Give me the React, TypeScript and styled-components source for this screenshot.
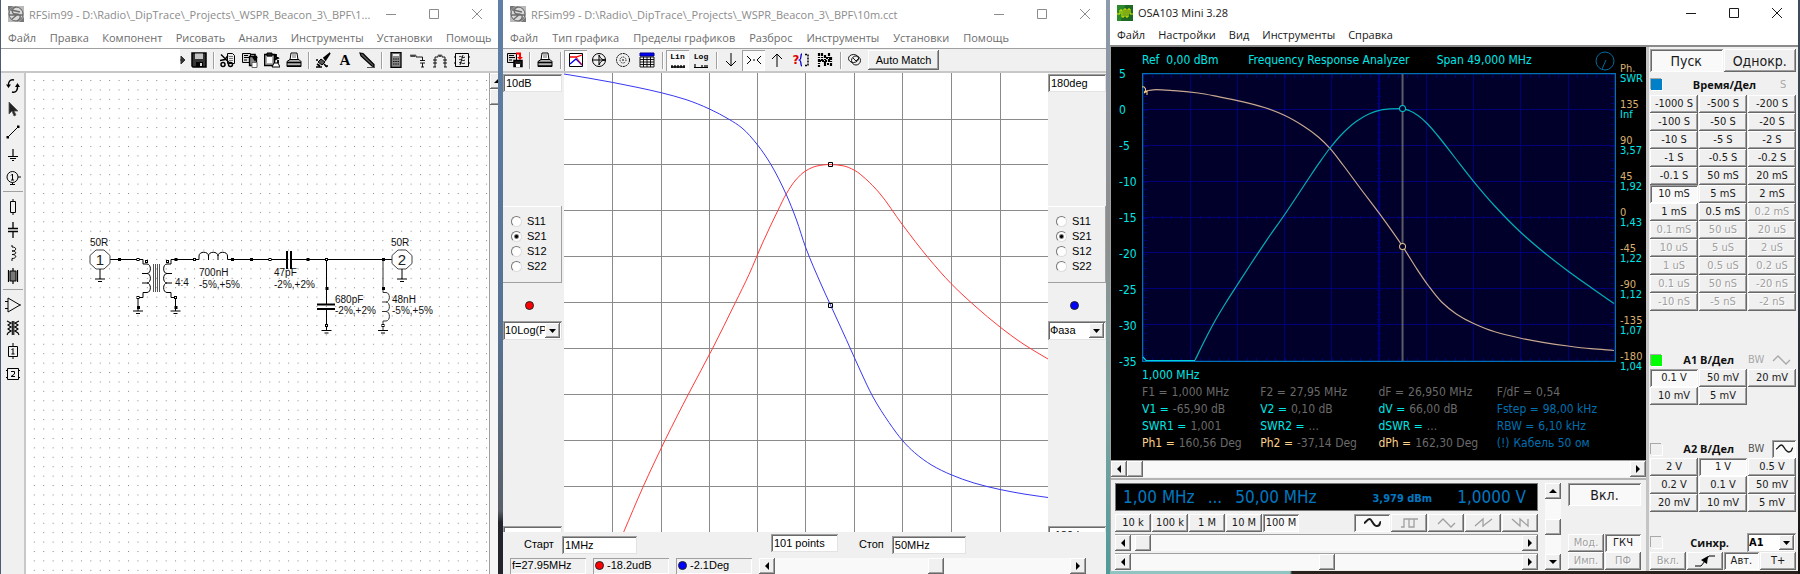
import React from "react";
import styled, { createGlobalStyle, css } from "styled-components";

const UI = `"Open Sans", "Noto Sans", sans-serif`;
const BITMAP = `"Liberation Sans", Arial, sans-serif`;
const TAHOMA = `"DejaVu Sans Condensed", "DejaVu Sans", Tahoma, sans-serif`;

const Global = createGlobalStyle`
  * { box-sizing: border-box; }
  body { margin: 0; background: #1c1c1c; font-family: ${UI}; }
  button, input, select { font: inherit; color: inherit; margin: 0; padding: 0; border: 0; border-radius: 0; min-width: 0; }
  svg { display: block; flex: none; }
`;

/* ---------- shared bevels ---------- */

const raised = css`
  background: #f0f0f0;
  box-shadow: inset -1px -1px #696969, inset 1px 1px #fff, inset -2px -2px #a0a0a0;
`;
const pressed = css`
  background: #f9f9f9;
  box-shadow: inset 1px 1px #a0a0a0, inset -1px -1px #fff, inset 2px 2px #696969;
`;
const sunken = css`
  background: #fff;
  box-shadow: inset 1px 1px #a0a0a0, inset -1px -1px #e3e3e3, inset 2px 2px #696969;
`;

/* ---------- desktop and windows ---------- */

const Desktop = styled.main`
  display: grid;
  grid-template-columns: 1px minmax(0, 497fr) 5px minmax(0, 603fr) 4px minmax(0, 688fr) 2px;
  min-height: 100vh;
  background: #1c1c1c;
`;

const Wallpaper = styled.div<{ $paint: string }>`
  background: ${(p) => p.$paint};
`;

const Win = styled.section`
  display: flex;
  flex-direction: column;
  min-width: 0;
  background: #f0f0f0;
`;

const TitleBar = styled.header<{ $compact?: boolean; $active?: boolean }>`
  display: flex;
  align-items: center;
  gap: 5px;
  height: ${(p) => (p.$compact ? 25 : 28)}px;
  padding-left: 7px;
  background: #fff;
  color: ${(p) => (p.$active ? "#1a1a1a" : "#8c8c8c")};
`;

const Title = styled.h1`
  flex: 1;
  min-width: 0;
  margin: 0;
  font-size: 11px;
  font-weight: 400;
  white-space: nowrap;
`;

const Caption = styled.div`
  display: flex;
`;

const CaptionButton = styled.button`
  display: grid;
  place-items: center;
  width: 43px;
  height: 24px;
  background: none;
`;

const MenuBar = styled.nav<{ $active?: boolean; $gap: number }>`
  display: flex;
  gap: ${(p) => p.$gap}px;
  height: 20px;
  padding: 0 7px;
  align-items: center;
  background: #fff;
  color: ${(p) => (p.$active ? "#1a1a1a" : "#6d6d6d")};
  font-size: 11px;
  line-height: 20px;
`;

const MenuItem = styled.button`
  background: none;
  white-space: nowrap;
`;

const Rule = styled.span`
  flex: none;
  width: 2px;
  height: 17px;
  margin: 0 2px 0 3px;
  background: linear-gradient(90deg, #a0a0a0 50%, #fff 50%);
`;

function CaptionButtons() {
  return (
    <Caption>
      <CaptionButton aria-label="Minimize">
        <svg width="12" height="12" stroke="currentColor" fill="none"><path d="M1 6.5h10" /></svg>
      </CaptionButton>
      <CaptionButton aria-label="Maximize">
        <svg width="12" height="12" stroke="currentColor" fill="none"><path d="M1.500 1.500h9v9h-9z" /></svg>
      </CaptionButton>
      <CaptionButton aria-label="Close">
        <svg width="12" height="12" stroke="currentColor" fill="none"><path d="M1 1l10 10M11 1L1 11" /></svg>
      </CaptionButton>
    </Caption>
  );
}

function Menu({ items, active, gap }: { items: string[]; active?: boolean; gap: number }) {
  return (
    <MenuBar $active={active} $gap={gap}>
      {items.map((t) => <MenuItem key={t}>{t}</MenuItem>)}
    </MenuBar>
  );
}

const SimIcon = () => (
  <svg width="16" height="16" viewBox="0 0 16 16">
    <rect width="16" height="16" fill="#b9b9b9" />
    <circle cx="8" cy="8" r="7" fill="#dadada" stroke="#606060" />
    <path d="M1 9h14M8 1c-5 2-5 7 0 7s6 4 1 7M3 4l9 2M4 13l6-5" fill="none" stroke="#6c6c6c" strokeWidth="1.300" />
    <path d="M0 0h5L0 5zM16 16h-5l5-5z" fill="#777" />
  </svg>
);

/* ---------- scroll bars ---------- */

const Scroll = styled.div<{ $vertical?: boolean }>`
  display: flex;
  flex-direction: ${(p) => (p.$vertical ? "column" : "row")};
  flex: 1;
  min-width: 0;
  ${(p) => (p.$vertical ? "width: 16px;" : "height: 16px;")}
`;

const ScrollArrow = styled.button`
  ${raised}
  display: grid;
  place-items: center;
  flex: none;
  width: 16px;
  height: 16px;
`;

const ScrollTrack = styled.input<{ $vertical?: boolean }>`
  appearance: none;
  flex: 1;
  min-width: 0;
  min-height: 0;
  background: #f9f9f9;
  ${(p) => (p.$vertical ? "width: 16px; writing-mode: vertical-lr;" : "height: 16px;")}
  &::-webkit-slider-thumb {
    appearance: none;
    width: 16px;
    height: 16px;
    ${raised}
  }
`;

const ARROWS = {
  left: "M10 4v8L6 8z",
  right: "M6 4v8l4-4z",
  up: "M4 10h8L8 6z",
  down: "M4 6h8l-4 4z",
};
const Arrow = ({ dir }: { dir: keyof typeof ARROWS }) => (
  <svg width="16" height="16"><path d={ARROWS[dir]} fill="#000" /></svg>
);

function ScrollBar({ value, label, vertical }: { value: number; label: string; vertical?: boolean }) {
  return (
    <Scroll $vertical={vertical}>
      <ScrollArrow aria-label={`${label}: back`}><Arrow dir={vertical ? "up" : "left"} /></ScrollArrow>
      <ScrollTrack type="range" min={0} max={100} defaultValue={value} aria-label={label} $vertical={vertical} />
      <ScrollArrow aria-label={`${label}: forward`}><Arrow dir={vertical ? "down" : "right"} /></ScrollArrow>
    </Scroll>
  );
}

/* ---------- toolbar ---------- */

const ToolBar = styled.div`
  display: flex;
  align-items: center;
  height: 25px;
  border-top: 1px solid #a0a0a0;
  border-bottom: 2px solid #c8c8c8;
  background: #f0f0f0;
`;

const Tool = styled.button<{ $on?: boolean; $w?: number }>`
  display: grid;
  place-items: center;
  flex: none;
  width: ${(p) => p.$w ?? 22}px;
  height: 21px;
  background: none;
  ${(p) => p.$on && css`background: #fafafa; box-shadow: inset 1px 1px #a0a0a0, inset -1px -1px #fff;`}
`;

const Glyph = ({ children, size = 16 }: { children: React.ReactNode; size?: number }) => (
  <svg width={size} height={size} viewBox="0 0 16 16" fill="none" stroke="#000">{children}</svg>
);

const icons: Record<string, React.ReactNode> = {
  save: <><path d="M1 1h14v14H2l-1-1z" fill="#333" strokeWidth="1.500" /><path d="M4 1.500h8V7H4z" fill="#c4c4c4" stroke="none" /><path d="M5 10h7v5H5z" fill="#000" stroke="none" /><path d="M9 11h2v3H9z" fill="#ddd" stroke="none" /></>,
  cut: <><path d="M7.500 1.500h5l2 2v8h-7z" fill="#eee" /><path d="M9 4.500h4M9 6.500h4M9 8.500h4" stroke="#777" /><path d="M1 2.500l8 8M0 8.500l5-1 3-4" strokeWidth="1.400" /><circle cx="3" cy="12.500" r="2" strokeWidth="1.500" /><circle cx="10.500" cy="12.500" r="2" strokeWidth="1.500" /></>,
  copy: <><path d="M.5 1.500h8v9h-8z" fill="#ddd" /><path d="M2 3.500h4M2 5.500h5M2 8h3" /><path d="M7.500 4.500h7v9h-7z" fill="#888" strokeWidth="1.300" /><path d="M9 2.500h4v4M15 5l-2 3-2-3" strokeWidth="1.600" /><path d="M10 10.500h5v5h-5z" fill="#fff" stroke="#666" /></>,
  paste: <><path d="M.5 2.500h10v11H.5z" fill="#aaa" strokeWidth="1.500" /><path d="M3 1h5v3H3z" fill="#222" /><path d="M3 5h5v6H3z" fill="#fff" stroke="none" /><path d="M12 2v6M10 3l4 3-4 2M14 8v3" strokeWidth="1.800" /><path d="M8 15l2-4h4l2 4z" fill="#fff" /></>,
  print: <><path d="M4 8l1-7h6l1 7" fill="#fff" /><path d="M6 3h4M6 5h4" stroke="#666" /><path d="M1 9.500l3-2h9l2 2v5H1z" fill="#b5b5b5" /><path d="M1 10.500h14M1 14h14" strokeWidth="1.500" /></>,
  brush: <><path d="M15 1L9 6l1.500 2z" fill="#000" strokeWidth="1.600" /><path d="M6 7l4 3-3 3-4-3z" fill="#555" /><path d="M1 8h2M2 12l3 2M1 15h6M9 12l3 3M10 14h3" strokeWidth="1.600" /></>,
  pencil: <><path d="M1 1l3 .5 11 11v2l-2-.5L2 4z" fill="#555" strokeWidth="1.200" /><path d="M8 15.500h8" stroke="#555" /></>,
  calc: <><path d="M3 .5h10v15H3z" fill="#888" strokeWidth="1.300" /><path d="M5 3h6" stroke="#eee" strokeWidth="2" /><path d="M5 7h6M5 9.500h6M5 12h6" stroke="#111" strokeDasharray="1.500 .8" /></>,
  match: <><path d="M0 5c0-3 2-3 2 0c0-3 2-3 2 0c0-3 2-3 2 0h6.500v4M10 8.500h5M10 11h5M12.500 11v4M11 15h3" strokeWidth=".9" /></>,
  filter: <><path d="M3 15V5h3c0-3 2-3 2 0c0-3 2-3 2 0h3v10M1 8h4M1 11h4M11 8h4M11 11h4M1 15h3M12 15h3" strokeWidth=".9" /></>,
  block: <><path d="M1.500 1.500h13v13h-13zM0 5h2M0 11h2M14 5h2M14 11h2" /><path d="M5 5c2-2 3 2 6 0M5 8c2-2 3 2 6 0M5 11c2-2 3 2 6 0M9 3l-3 10" strokeWidth=".9" /></>,
  rotate: <><path d="M9 2C5 1 3 4 3.500 8M7 14c4 1 6-2 5.500-6" strokeWidth="1.400" /><path d="M1 6.500h5L3.500 10zM10 9l2.500-4 2.500 4z" fill="#000" stroke="none" /></>,
  pointer: <path d="M4 1v12l3-3 2 5 2-1-2-4h4z" fill="#222" stroke="#555" strokeWidth=".8" />,
  wire: <><path d="M3 13L13 3" /><path d="M1.500 12h2.500v2.500H1.500zM12 1.500h2.500v2.500H12z" fill="#000" stroke="none" /></>,
  ground: <path d="M8 2v7M3 9.500h10M5 11.500h6M7 13.500h2" strokeWidth="1.200" />,
  port: <><circle cx="7.500" cy="7" r="5.500" /><path d="M13 7h3M7.500 12.500V15M5 14.500h5M6 5.500L7.500 4v6M6 10h3" /></>,
  resistor: <path d="M8 0v2M5.500 2.500h5v11h-5zM8 14v2" />,
  cap: <path d="M8 0v6M3 6.500h10M3 9.500h10M8 10v6" strokeWidth="1.300" />,
  coil: <path d="M7 0v2c5 0 5 4 0 4c5 0 5 3.500 0 3.500c5 0 5 4 0 4V16" />,
  tline: <><path d="M5 3h6v10H5z" fill="#777" /><path d="M8 0v3M8 13v3M3.500 2v12M12.500 2v12" strokeWidth="1.200" /></>,
  opamp: <path d="M3 1v14l12-7zM0 4.500h3M0 11.500h3M15 8h1" />,
  transformer: <path d="M2 1l4 2-3 2 3 2-3 2 3 2-3 2-1 2M14 1l-4 2 3 2-3 2 3 2-3 2 3 2 1 2M7.300 1v14M8.800 1v14" strokeWidth="1.100" />,
  box1: <path d="M3.500 3.500h9v10h-9zM8 0v3M8 14v2M6.500 7L8 5.500v5.500M6.500 11h3" />,
  box2: <path d="M2.500 2.500h11v11h-11zM1 4.500h1M1 11.500h1M14 4.500h1M14 11.500h1M6 5.500h3.500v2.500L6 10.500h4" />,
  copysave: <><path d="M.5 1.500h9v9h-9z" fill="#ddd" /><path d="M2 3.500h5M2 5.500h6M2 8h3" /><path d="M9 1.500h4v4" stroke="red" strokeWidth="2" /><path d="M10 5h6l-3 3z" fill="red" stroke="none" /><path d="M7 8.500h8v6H7z" fill="#222" strokeWidth="1.500" /><path d="M9 12h4v3H9z" fill="#fff" stroke="none" /></>,
  graph: <><path d="M1.500 1.500h13v13h-13z" fill="#fff" /><path d="M2 5h6l6-2" stroke="red" strokeWidth="1.300" /><path d="M2 12l6-5 6 6" stroke="#00f" strokeWidth="1.300" /><path d="M8 5l6 8" stroke="red" /></>,
  smith: <><circle cx="8" cy="8" r="6.500" /><path d="M1 8h14M8 3c1 3 3 5 6 5M8 13c1-3 3-5 6-5M8 3v10" /></>,
  polar: <><circle cx="8" cy="8" r="6.500" strokeDasharray="2 .7" /><circle cx="8" cy="8" r="3" strokeDasharray="1 1" /><path d="M8 7v2" /></>,
  table: <><path d="M1 1h14v3H1z" fill="#00f" stroke="#008" /><path d="M1 5h14v10H1zM1 7.500h14M1 10h14M1 12.500h14M4.500 5v10M8 5v10M11.500 5v10" strokeWidth=".9" /></>,
  lin: <path d="M1 14h14M2 12v3M5 12v3M8 12v3M11 12v3M14 12v3" strokeWidth="1.300" />,
  log: <path d="M1 14.500h14M2 11v3M9 12v2M12 12v2M14 12v2" strokeWidth="1.200" />,
  down: <path d="M8 1v13M3 9l5 5 5-5" />,
  center: <path d="M1 4l4 4-4 4M15 4l-4 4 4 4M7 8h2" />,
  up: <path d="M8 15V2M3 7l5-5 5 5" />,
  query: <><path d="M9 2C7 2 9 7 6.500 8C9 9 7 14 9 14" stroke="#00c" strokeWidth="1.300" /><path d="M12 2.500h3v11h-3" strokeDasharray="2 1" strokeWidth="1.500" /></>,
  noise: <><path d="M2 1v14M5 1v8M8 3v12M12 1v10M14 5v10" strokeWidth="2.200" strokeDasharray="3 1 1 1" /><path d="M1 3h6M9 6h6M2 9h8M7 12h7" strokeDasharray="2 1" strokeWidth="1.800" /></>,
  smithSmall: <><ellipse cx="6.500" cy="6.500" rx="5" ry="4" strokeWidth=".9" /><circle cx="9" cy="8.500" r="4.500" strokeWidth=".9" /><path d="M6 6l3 3 3-3" strokeWidth=".9" /></>,
};

const ToolLetter = styled.span`
  font: 700 15px "Liberation Serif", serif;
`;
const ScaleTool = styled.span`
  display: grid;
  justify-items: center;
  font: 700 8px/9px "Liberation Mono", monospace;
  svg { margin-top: -8px; }
`;
const QueryTool = styled.span`
  display: flex;
  align-items: center;
  color: #e00000;
  font: 700 13px/16px ${TAHOMA};
  svg { margin-left: -6px; }
`;

/* ---------- schematic window ---------- */

const EmptyField = styled.div`
  align-self: stretch;
  flex: 0 0 179px;
  background: #fff;
`;

const EditorBody = styled.div`
  display: flex;
  flex: 1;
  min-height: 0;
`;

const Palette = styled.div`
  display: flex;
  flex-direction: column;
  align-items: center;
  width: 25px;
  border-right: 2px solid #c8c8c8;
`;

const PaletteGroup = styled.div`
  display: flex;
  flex-direction: column;
  padding: 1px 0 2px;
  border-bottom: 1px solid #a0a0a0;
  margin-bottom: 2px;
  &:last-child { border: 0; }
`;

const PaletteButton = styled.button`
  display: grid;
  place-items: center;
  width: 20px;
  height: 23px;
  background: none;
`;

const Sheet = styled.svg`
  flex: 1 1 0;
  min-width: 0;
  background: #fff;
`;

const SheetScroll = styled.div`
  display: flex;
  flex-direction: column;
  width: 9px;
  overflow: hidden;
  border-left: 1px solid #a0a0a0;
  background: #f6f6f6;
`;

const Pin = ({ x, y, open }: { x: number; y: number; open?: boolean }) => (
  <rect x={x - 1} y={y - 1} width={open ? 2 : 3} height={open ? 2 : 3} fill={open ? "#fff" : "#000"} stroke={open ? "#000" : "none"} />
);
const Ground = ({ x, y }: { x: number; y: number }) => (
  <path d={`M${x - 5} ${y}h10M${x - 2} ${y + 2.5}h4`} />
);
const Port = ({ x, n }: { x: number; n: string }) => (
  <g>
    <path d={`M${x - 4} 250h8l6 5.500v8l-6 5.500h-8l-6-5.500v-8z`} fill="#fff" stroke="#444" />
    <path d={`M${x} 269v10`} />
    <Ground x={x} y={279} />
    <text x={x} y={265} textAnchor="middle" fontSize="15" fill="#222" stroke="none">{n}</text>
  </g>
);

function Schematic() {
  const labels: [number, number, string][] = [
    [90, 246, "50R"], [391, 246, "50R"], [175, 286, "4:4"],
    [199, 276, "700nH"], [199, 288, "-5%,+5%"],
    [274, 276, "47pF"], [274, 288, "-2%,+2%"],
    [335, 303, "680pF"], [335, 314, "-2%,+2%"],
    [392, 303, "48nH"], [392, 314, "-5%,+5%"],
  ];
  return (
    <Sheet width="100%" height="100%" role="img" aria-label="Schematic">
      <defs>
        <pattern id="dots" width="9.420" height="9.420" patternUnits="userSpaceOnUse" x="7.800" y="7">
          <rect width="1" height="1" fill="#858585" />
        </pattern>
      </defs>
      <rect width="100%" height="100%" fill="url(#dots)" />
      <g transform="translate(-26 -73)" fill="none" stroke="#000" fontFamily={BITMAP} fontSize="10">
        <path d="M110 259.500h33v4.500h4c4.500 0 4.500 9.500 0 9.500h-5M147 273.500c4.500 0 4.500 9.500 0 9.500h-5M147 283c4.500 0 4.500 9.500 0 9.500h-4v5h-5v13.500" />
        <path d="M194.500 259.500H171v4.500h-4c-4.500 0-4.500 9.500 0 9.500h5M167 273.500c-4.500 0-4.500 9.500 0 9.500h5M167 283c-4.500 0-4.500 9.500 0 9.500h4v5h4.500v13.500" />
        <path d="M153.500 264v28M155.500 264v28M157.500 264v28M159.500 264v28" stroke="#555" />
        <path d="M194 259.500h5v-3.500c0-5 9.500-5 9.500 0v4M208.500 256c0-5 9.500-5 9.500 0v4M218 256c0-5 9.500-5 9.500 0v3.500H286" />
        <path d="M287 251v18M291 251v18M317 304.500h18M317 309h18" strokeWidth="2" />
        <path d="M292 259.500h100M326.500 259.500v45M326.500 309v21" />
        <path d="M383 259.500v33h3c4.500 0 4.500 9.500 0 9.500h-4M386 302c4.500 0 4.500 9.500 0 9.500h-4M386 311.500c4.500 0 4.500 9.500 0 9.500h-3v9" stroke="#333" />
        <Ground x={138} y={311} /><Ground x={175.5} y={311} /><Ground x={326.5} y={330.5} /><Ground x={383} y={330.5} />
        <Pin x={119} y={259} /><Pin x={138} y={259.5} open /><Pin x={146.5} y={261.5} open /><Pin x={138} y={297.5} open /><Pin x={138} y={307} />
        <Pin x={167.5} y={261.5} open /><Pin x={175.5} y={259} /><Pin x={175.5} y={297.5} open /><Pin x={175.5} y={307} />
        <Pin x={194.5} y={259.5} open /><Pin x={232} y={259} /><Pin x={251} y={259} /><Pin x={270} y={259.5} open />
        <Pin x={307.5} y={259} /><Pin x={326.5} y={259.5} open /><Pin x={383} y={259} /><Pin x={326.5} y={288} /><Pin x={326.5} y={325.5} open />
        <Pin x={383} y={288} /><Pin x={383} y={325.5} open />
        <Port x={100} n="1" /><Port x={402} n="2" />
        {labels.map(([x, y, t], i) => <text key={i} x={x} y={y} fill="#111" stroke="none">{t}</text>)}
      </g>
    </Sheet>
  );
}

function EditorWindow() {
  const groups = [
    ["rotate", "pointer", "wire", "ground", "port"],
    ["resistor", "cap", "coil", "tline"],
    ["opamp", "transformer", "box1", "box2"],
  ];
  const tool = (k: string) => <Tool key={k} aria-label={k}><Glyph>{icons[k]}</Glyph></Tool>;
  return (
    <Win>
      <TitleBar>
        <SimIcon />
        <Title>RFSim99 - D:\Radio\_DipTrace\_Projects\_WSPR_Beacon_3\_BPF\1...</Title>
        <CaptionButtons />
      </TitleBar>
      <Menu gap={14} items={["Файл", "Правка", "Компонент", "Рисовать", "Анализ", "Инструменты", "Установки", "Помощь"]} />
      <ToolBar>
        <EmptyField />
        <svg width="8" height="16"><path d="M1 4l4 4-4 4zM0 8h3" fill="#333" stroke="#333" /></svg>
        {tool("save")}<Rule />{["cut", "copy", "paste", "print"].map(tool)}<Rule />
        {tool("brush")}<Tool aria-label="text"><ToolLetter>A</ToolLetter></Tool>{tool("pencil")}<Rule />
        {["calc", "match", "filter", "block"].map(tool)}
      </ToolBar>
      <EditorBody>
        <Palette>
          {groups.map((g, i) => (
            <PaletteGroup key={i}>
              {g.map((k) => <PaletteButton key={k} aria-label={k}><Glyph>{icons[k]}</Glyph></PaletteButton>)}
            </PaletteGroup>
          ))}
        </Palette>
        <Schematic />
        <SheetScroll>
          <ScrollArrow aria-label="Scroll up"><Arrow dir="up" /></ScrollArrow>
          <ScrollArrow aria-label="Scroll position" />
        </SheetScroll>
      </EditorBody>
    </Win>
  );
}

/* ---------- simulation window ---------- */

type Pt = [number, number];

/* Monotone cubic through the samples, x strictly increasing. */
function smooth(p: Pt[]) {
  const n = p.length;
  const s = p.slice(1).map((b, i) => (b[1] - p[i][1]) / (b[0] - p[i][0]));
  const m = p.map((_, i) => {
    if (i === 0) return s[0];
    if (i === n - 1) return s[n - 2];
    if (s[i - 1] * s[i] <= 0) return 0;
    const h0 = p[i][0] - p[i - 1][0], h1 = p[i + 1][0] - p[i][0];
    return (3 * (h0 + h1)) / ((2 * h1 + h0) / s[i - 1] + (h1 + 2 * h0) / s[i]);
  });
  let d = `M${p[0][0]} ${p[0][1]}`;
  for (let i = 0; i < n - 1; i++) {
    const [ax, ay] = p[i], [bx, by] = p[i + 1], h = (bx - ax) / 3;
    d += `C${ax + h} ${ay + m[i] * h} ${bx - h} ${by - m[i + 1] * h} ${bx} ${by}`;
  }
  return d;
}

const simPhase: Pt[] = [[564, 74], [588, 78], [612.5, 82.4], [637, 87.3], [661.5, 92.8], [686, 99.6], [709.5, 109], [729, 119.3], [742, 128], [757.6, 145], [770.8, 164.3], [786, 194], [796.5, 220], [805.5, 247], [821.4, 285], [830.5, 305], [846.3, 339.5], [860, 370], [873, 397], [889, 422.5], [902.5, 440.5], [914.4, 452.5], [932, 465.3], [951, 474.7], [974, 483], [1000, 489.5], [1024, 494], [1048, 497.5]];
const simGain: Pt[] = [[623.7, 532], [642.8, 487.5], [665.4, 439.5], [689, 393], [712.8, 348], [735.4, 302.5], [749, 274.5], [763, 242], [777.8, 210.7], [786.5, 193.5], [795.7, 180], [805.5, 171], [817, 166], [830, 164.5], [843, 165.8], [854.5, 170.3], [865.8, 179], [879.4, 193], [902.3, 224.5], [928, 257.5], [951, 283.5], [975, 306], [1000, 327], [1024, 344.5], [1048, 359]];

const SimTools = styled(ToolBar)`
  padding-left: 1px;
`;

const AutoMatch = styled.button`
  ${raised}
  width: 71px;
  height: 20px;
  margin-left: 2px;
  font: 11px ${BITMAP};
`;

const SimBody = styled.div`
  display: grid;
  grid-template-columns: 61px minmax(0, 1fr) 58px;
  height: 459px;
`;

const SidePanel = styled.div`
  display: flex;
  flex-direction: column;
  padding-top: 1px;
  overflow: hidden;
  font: 11px/15px ${BITMAP};
  &:first-child { margin-right: 2px; }
`;

const Field = styled.input<{ $w?: number }>`
  ${sunken}
  flex: none;
  width: ${(p) => (p.$w ? p.$w + "px" : "100%")};
  height: 18px;
  padding: 2px 3px;
  font: 11px/14px ${BITMAP};
`;

const RadioGroup = styled.fieldset`
  display: flex;
  flex-direction: column;
  gap: 0;
  height: 77px;
  margin: 114px 0 0;
  padding: 8px 0 0 8px;
  border: 0;
  box-shadow: inset -1px -1px #a0a0a0, inset 0 1px #fff;
`;

const RadioLabel = styled.label`
  display: flex;
  align-items: center;
  gap: 5px;
  height: 15px;
`;

const Radio = styled.input`
  appearance: none;
  width: 11px;
  height: 11px;
  border: 1px solid;
  border-color: #777 #ddd #ddd #777;
  border-radius: 50%;
  background: #fff;
  &:checked { background: radial-gradient(circle, #000 1px, #fff 3px); }
`;

const Lamp = styled.span<{ $c: string; $small?: boolean }>`
  flex: none;
  width: 9px;
  height: 9px;
  margin: ${(p) => (p.$small ? "0" : "18px auto 11px 22px")};
  border: 1px solid #222;
  border-radius: 50%;
  background: ${(p) => p.$c};
`;

const SelectBox = styled.span<{ $w?: number }>`
  ${sunken}
  position: relative;
  display: block;
  flex: none;
  width: ${(p) => (p.$w ? p.$w + "px" : "100%")};
  height: 19px;
  select {
    appearance: none;
    width: 100%;
    height: 19px;
    padding-left: 2px;
    background: none;
  }
  svg {
    position: absolute;
    top: 2px;
    right: 2px;
    ${raised}
    pointer-events: none;
  }
`;

const Push = styled.div`
  flex: 1;
`;

function SelectField({ label, value, w }: { label: string; value: string; w?: number }) {
  return (
    <SelectBox $w={w}>
      <select aria-label={label}><option>{value}</option></select>
      <svg width="15" height="15"><path d="M4 6h7l-3.500 4z" /></svg>
    </SelectBox>
  );
}

const Plot = styled.svg`
  width: 100%;
  height: 100%;
  background: #fff;
`;

const BottomClip = styled.div`
  flex: none;
  height: 6px;
  overflow: hidden;
`;

function Side({ name, top, bottom, lamp, mode }: { name: string; top: string; bottom: string; lamp: string; mode: string }) {
  return (
    <SidePanel>
      <Field defaultValue={top} aria-label={`${name} top`} />
      <RadioGroup>
        {["S11", "S21", "S12", "S22"].map((s) => (
          <RadioLabel key={s}><Radio type="radio" name={name} defaultChecked={s === "S21"} />{s}</RadioLabel>
        ))}
      </RadioGroup>
      <Lamp $c={lamp} />
      <SelectField label={`${name} mode`} value={mode} />
      <Push />
      <BottomClip><Field defaultValue={bottom} aria-label={`${name} bottom`} /></BottomClip>
    </SidePanel>
  );
}

const SweepRow = styled.div`
  display: flex;
  align-items: center;
  height: 25px;
  padding-left: 21px;
  font: 11px/15px ${BITMAP};
`;

const SweepLabel = styled.label`
  display: flex;
  align-items: center;
  gap: 8px;
`;

const Points = styled.div`
  margin: -3px 21px 0 134px;
`;

const StatusRow = styled.footer`
  display: flex;
  gap: 7px;
  align-items: center;
  height: 17px;
  padding: 0 20px 0 7px;
  font: 11px/15px ${BITMAP};
`;

const StatusCell = styled.output`
  display: flex;
  align-items: center;
  gap: 3px;
  width: 76px;
  height: 16px;
  padding-left: 2px;
  box-shadow: inset 1px 1px #a0a0a0, inset -1px -1px #fff;
`;

function SimWindow() {
  const t = (k: string, on?: boolean, w?: number) => (
    <Tool aria-label={k} $on={on} $w={w}><Glyph>{icons[k]}</Glyph></Tool>
  );
  return (
    <Win>
      <TitleBar>
        <SimIcon />
        <Title>RFSim99 - D:\Radio\_DipTrace\_Projects\_WSPR_Beacon_3\_BPF\10m.cct</Title>
        <CaptionButtons />
      </TitleBar>
      <Menu gap={14} items={["Файл", "Тип графика", "Пределы графиков", "Разброс", "Инструменты", "Установки", "Помощь"]} />
      <SimTools>
        {t("copysave")}<Rule />{t("print", false, 24)}<Rule />
        {t("graph", true, 23)}{t("smith", false, 24)}{t("polar", false, 24)}{t("table", false, 24)}<Rule />
        <Tool $on $w={23} aria-label="Linear"><ScaleTool>Lin<Glyph>{icons.lin}</Glyph></ScaleTool></Tool>
        <Tool $w={24} aria-label="Logarithmic"><ScaleTool>Log<Glyph>{icons.log}</Glyph></ScaleTool></Tool>
        <Rule />{t("down")}{t("center", true, 23)}{t("up", false, 24)}
        <Tool $w={24} aria-label="Marker query"><QueryTool>?<Glyph>{icons.query}</Glyph></QueryTool></Tool>
        {t("noise", false, 24)}<Rule />{t("smithSmall")}
        <AutoMatch>Auto Match</AutoMatch>
      </SimTools>
      <SimBody>
        <Side name="left" top="10dB" bottom="" lamp="#f00" mode="10Log(P)" />
        <Plot viewBox="564 73 484 459" preserveAspectRatio="none" fill="none">
          <g stroke="#8a8a8a" shapeRendering="crispEdges">
            {[612, 661, 709, 757, 805, 854, 902, 951, 1000].map((x) => <path key={x} d={`M${x}.500 73v459`} />)}
            {[119, 164, 210, 256, 302, 348, 394, 440, 486].map((y) => <path key={y} d={`M564 ${y}.500h484`} />)}
          </g>
          <path d={smooth(simGain)} stroke="#ff3b3b" />
          <path d={smooth(simPhase)} stroke="#3838f0" />
          <path d="M828.500 162.500h4v4h-4zM828.500 303.500h4v4h-4z" stroke="#000" />
        </Plot>
        <Side name="right" top="180deg" bottom="-180deg" lamp="#00f" mode="Фаза" />
      </SimBody>
      <SweepRow>
        <SweepLabel>Старт<Field $w={75} defaultValue="1MHz" /></SweepLabel>
        <Points><Field $w={67} defaultValue="101 points" aria-label="Points" /></Points>
        <SweepLabel>Стоп<Field $w={74} defaultValue="50MHz" /></SweepLabel>
      </SweepRow>
      <StatusRow>
        <StatusCell>f=27.95MHz</StatusCell>
        <StatusCell><Lamp $small $c="#f00" />-18.2udB</StatusCell>
        <StatusCell><Lamp $small $c="#00f" />-2.1Deg</StatusCell>
        <ScrollBar label="Marker frequency" value={55} />
      </StatusRow>
    </Win>
  );
}

/* ---------- analyzer window ---------- */

const anaGain: Pt[] = [[1195, 360], [1203.5, 342.5], [1214.5, 321.5], [1225.5, 303], [1237, 285], [1249.6, 265.5], [1266, 240.8], [1284.4, 214.5], [1308, 179], [1319, 162.7], [1330, 147.5], [1343.6, 132], [1356.4, 121], [1368.4, 114], [1379, 110.3], [1389, 108.8], [1402, 108.6], [1409, 110.8], [1417, 115.2], [1427, 124], [1437, 135.5], [1453, 156], [1472.4, 180.8], [1494, 206], [1519, 231.5], [1542, 251.5], [1567, 271], [1590, 287.5], [1613, 303.5]];
const anaPhase: Pt[] = [[1144, 92], [1149, 90.5], [1156, 89.6], [1174, 90.6], [1198, 93], [1219, 96.8], [1243, 101.8], [1265, 107.8], [1284, 115.3], [1303, 126], [1318, 137], [1330, 148.8], [1343, 165.5], [1360, 188.5], [1379, 213.7], [1402, 246.3], [1416, 268.5], [1428, 286], [1441, 302], [1456, 314.2], [1472.4, 323.3], [1494, 331.8], [1519, 338], [1542, 342.3], [1567, 346], [1590, 348.7], [1613, 350.5]];

const AnalyzerBody = styled.div`
  display: grid;
  grid-template-columns: minmax(0, 1fr) 152px;
  border-top: 2px solid #8a8a8a;
  border-left: 1px solid #a0a0a0;
`;

const AnalyzerMain = styled.div`
  display: flex;
  flex-direction: column;
  min-width: 0;
`;

const Screen = styled.div`
  height: 414px;
  background: #000;
  color: #00e6e6;
  font: 12px/17px ${TAHOMA};
`;

const ScreenHeader = styled.div`
  display: flex;
  align-items: center;
  height: 26px;
  padding: 1px 31px 0;
  white-space: pre;
`;

const HeaderText = styled.span<{ $w: number }>`
  flex: ${(p) => p.$w} 0 0;
`;

const ChartRow = styled.div`
  display: grid;
  grid-template-columns: 31px minmax(0, 1fr) 30px;
  grid-template-rows: 289px;
`;

const LeftAxis = styled.div`
  display: flex;
  flex-direction: column;
  justify-content: space-between;
  height: 302px;
  margin-top: -6px;
  padding-left: 8px;
  line-height: 14px;
`;

const RightAxis = styled.div`
  display: flex;
  flex-direction: column;
  gap: 16px;
  height: 289px;
  margin-top: -9px;
  padding-left: 4px;
  font-size: 11px;
  line-height: 10px;
`;

const AxisPair = styled.div`
  display: grid;
  flex: none;
  height: 20px;
`;

const Tan = styled.span`
  color: #d8b070;
`;

const Readouts = styled.dl`
  display: grid;
  grid-template-columns: repeat(4, minmax(0, 118fr)) 31fr;
  margin: 0;
  padding: 5px 0 0 31px;
  white-space: nowrap;
`;

const Readout = styled.div<{ $tone: string; $all?: boolean; $first?: boolean }>`
  display: flex;
  gap: 4px;
  ${(p) => p.$first && "grid-column: 1 / -1;"}
  dt { color: ${(p) => p.$tone}; }
  dd { margin: 0; color: ${(p) => (p.$all ? p.$tone : "#6a6a6a")}; }
`;

const Generator = styled.div`
  display: grid;
  grid-template-columns: minmax(0, 1fr) 16px 73px;
  gap: 7px;
  padding: 3px 5px 1px 4px;
  border-top: 2px solid #b4b4b4;
  margin-top: 1px;
  font: 11px/14px ${TAHOMA};
`;

const GenMain = styled.div`
  display: flex;
  flex-direction: column;
  gap: 3px;
  min-width: 0;
`;

const GenDisplay = styled.div`
  display: flex;
  align-items: center;
  gap: 13px;
  height: 28px;
  padding: 0 11px 0 7px;
  border: 1px solid #777;
  background: #000;
  color: #0078c0;
  font-size: 17px;
  white-space: nowrap;
  strong { font-size: 11px; margin: 3px 12px 0 auto; }
`;

const GenButtons = styled.div`
  display: flex;
  gap: 1px;
  height: 18px;
`;

const Btn = styled.button<{ $on?: boolean; $size?: number; $h?: number; $w?: number }>`
  ${(p) => (p.$on ? pressed : raised)}
  display: grid;
  place-items: center;
  ${(p) => p.$w && `width: ${p.$w}px;`}
  height: ${(p) => p.$h ?? 18}px;
  font-size: ${(p) => p.$size ?? 11}px;
  white-space: nowrap;
  color: #1a1a1a;
  &:disabled { color: #a0a0a0; text-shadow: 1px 1px #fff; }
`;

const ScrollLine = styled.div`
  display: flex;
  height: 16px;
  box-shadow: 0 -1px #a0a0a0;
`;

const GenSide = styled.div`
  display: grid;
  grid-template-columns: 1fr 1fr;
  grid-template-rows: 23px 1fr 18px 18px;
  column-gap: 1px;
  > :first-child { grid-column: 1 / -1; }
  > :nth-child(n + 2) { grid-row: 3; }
  > :nth-child(n + 4) { grid-row: 4; }
`;

const WAVES = {
  sine: "M1 7C3 7 4 3 6.500 3S10 10 14 10S16 6 18 6",
  square: "M1 11h3V3h5v8h5V3h4M9 3h5v8",
  tri: "M1 8l5-5 8 8 4-4",
  saw: "M1 10l8-7v7l9-7M9 3v8",
  ramp: "M1 3l8 7V3l8 7V3",
};
const Wave = ({ kind, bold }: { kind: keyof typeof WAVES; bold?: boolean }) => (
  <svg width="19" height="14" viewBox="0 0 19 14" fill="none" stroke="currentColor" strokeWidth={bold ? 2 : 1.3}><path d={WAVES[kind]} /></svg>
);

const Controls = styled.aside`
  display: flex;
  flex-direction: column;
  padding: 2px 2px 1px 1px;
  border-left: 3px solid #c4c4c4;
  font: 11px/14px ${TAHOMA};
`;

const RunRow = styled.div`
  display: grid;
  grid-template-columns: 1fr 1fr;
  gap: 1px;
`;

const SectionHead = styled.div<{ $mt: number; $h: number }>`
  display: grid;
  grid-template-columns: 14px 1fr 24px 24px;
  align-items: center;
  height: ${(p) => p.$h}px;
  margin-top: ${(p) => p.$mt}px;
  padding-left: 1px;
  h2 { margin: 0; font: 700 11px/16px ${UI}; text-align: right; padding-right: 14px; white-space: nowrap; color: #111; }
`;

const WideHead = styled(SectionHead)<{ $last: number; $pr: number }>`
  grid-template-columns: 14px 1fr ${(p) => p.$last}px;
  h2 { padding-right: ${(p) => p.$pr}px; }
`;

const Check = styled.input<{ $c?: string }>`
  appearance: none;
  width: 11px;
  height: 11px;
  background: ${(p) => p.$c ?? "#f0f0f0"};
  box-shadow: -1px -1px #a8a8a8, 1px 1px #fff;
`;

const Dim = styled.span<{ $dark?: boolean }>`
  color: ${(p) => (p.$dark ? "#555" : "#a8a8a8")};
`;

const ButtonGrid = styled.div`
  display: grid;
  grid-template-columns: repeat(3, 1fr);
  column-gap: 1px;
`;

const BottomButtons = styled.div`
  display: grid;
  grid-template-columns: repeat(4, 1fr);
  gap: 1px;
`;

const TIMES = ["-1000 S", "-500 S", "-200 S", "-100 S", "-50 S", "-20 S", "-10 S", "-5 S", "-2 S", "-1 S", "-0.5 S", "-0.2 S", "-0.1 S", "50 mS", "20 mS", "10 mS", "5 mS", "2 mS", "1 mS", "0.5 mS"];
const TIMES_OFF = ["0.2 mS", "0.1 mS", "50 uS", "20 uS", "10 uS", "5 uS", "2 uS", "1 uS", "0.5 uS", "0.2 uS", "0.1 uS", "50 nS", "-20 nS", "-10 nS", "-5 nS", "-2 nS"];

const CYAN = "#00e6e6";
const TAN = "#ffd28a";
const GREY = "#6a6a6a";
const BLUE = "#0070b0";
const READOUTS: [string, string, string, boolean?][] = [
  ["F1 =", "1,000 MHz", GREY], ["F2 =", "27,95 MHz", GREY], ["dF =", "26,950 MHz", GREY], ["F/dF =", "0,54", GREY],
  ["V1 =", "-65,90 dB", CYAN], ["V2 =", "0,10 dB", CYAN], ["dV =", "66,00 dB", CYAN], ["Fstep =", "98,00 kHz", BLUE, true],
  ["SWR1 =", "1,001", CYAN], ["SWR2 =", "...", CYAN], ["dSWR =", "...", CYAN], ["RBW =", "6,10 kHz", BLUE, true],
  ["Ph1 =", "160,56 Deg", TAN], ["Ph2 =", "-37,14 Deg", TAN], ["dPh =", "162,30 Deg", TAN], ["(!)", "Кабель 50 ом", BLUE, true],
];

function AnalyzerChart() {
  const xs = [1190, 1237, 1284, 1331, 1378, 1425, 1472, 1519, 1567];
  const ys = [109, 145, 181, 217, 252, 288, 324];
  return (
    <Plot viewBox="1142 73 473 289" preserveAspectRatio="none" fill="none">
      <rect x="1142" y="73" width="473" height="289" fill="#00002a" />
      <g stroke="#000078" shapeRendering="crispEdges">
        {xs.map((x) => <path key={x} d={`M${x}.500 73v289`} />)}
        {ys.map((y) => <path key={y} d={`M1142 ${y}.500h473`} />)}
        <path d="M1143 76h471M1143 217.500h471M1143 359h471" strokeWidth="3" strokeDasharray="1 8.420" />
        <path d="M1145 74v287M1378.500 74v287M1612 74v287" strokeWidth="3" strokeDasharray="1 6.200" />
      </g>
      <path d="M1402 73v289" stroke="#5a5a68" strokeWidth="2" />
      <rect x="1142.500" y="73.500" width="472" height="288" stroke="#0070b8" strokeWidth="1.500" />
      <path d={smooth(anaPhase)} stroke="#c8a890" strokeWidth="1.200" />
      <path d="M1143 357l3 3.500h49" stroke="#00d0d8" strokeWidth="1.200" />
      <path d={smooth(anaGain)} stroke="#00b0b8" strokeWidth="1.200" />
      <path d="M1142 87c3-1 5 3 2 6l3-2v4" stroke="#ffd28a" />
      <circle cx="1402" cy="108.500" r="3" stroke="#00c8d0" fill="#00002a" />
      <circle cx="1402" cy="246.500" r="3" stroke="#e0c090" fill="#00002a" />
    </Plot>
  );
}

function AnalyzerWindow() {
  const pairs = [["Ph.", "SWR"], ["135", "Inf"], ["90", "3,57"], ["45", "1,92"], ["0", "1,43"], ["-45", "1,22"], ["-90", "1,12"], ["-135", "1,07"], ["-180", "1,04"]];
  return (
    <Win>
      <TitleBar $compact $active>
        <svg width="16" height="16">
          <rect width="16" height="16" fill="#2c8a2c" />
          <path d="M8 0h8v16H4z" fill="#1e6a24" />
          <path d="M0 9h3V5h2v7h2V4h2v8h2V4h2v5h3" fill="none" stroke="#e4f000" />
        </svg>
        <Title>OSA103 Mini 3.28</Title>
        <CaptionButtons />
      </TitleBar>
      <Menu active gap={13} items={["Файл", "Настройки", "Вид", "Инструменты", "Справка"]} />
      <AnalyzerBody>
        <AnalyzerMain>
          <Screen>
            <ScreenHeader>
              <HeaderText $w={106}>Ref  0,00 dBm</HeaderText>
              <HeaderText $w={188}>Frequency Response Analyzer</HeaderText>
              <HeaderText $w={158}>Span 49,000 MHz</HeaderText>
              <svg width="20" height="20" fill="none" stroke="#006aa0"><circle cx="10" cy="10" r="9" /><path d="M11 9l-4 9" /></svg>
            </ScreenHeader>
            <ChartRow>
              <LeftAxis>{["5", "0", "-5", "-10", "-15", "-20", "-25", "-30", "-35"].map((v) => <span key={v}>{v}</span>)}</LeftAxis>
              <AnalyzerChart />
              <RightAxis>{pairs.map(([a, b]) => <AxisPair key={b}><Tan>{a}</Tan><span>{b}</span></AxisPair>)}</RightAxis>
            </ChartRow>
            <Readouts>
              <Readout $tone={CYAN} $first><dt>1,000 MHz</dt></Readout>
              {READOUTS.map(([k, v, tone, all], i) => (
                <React.Fragment key={k}>
                  <Readout $tone={tone} $all={all}><dt>{k}</dt><dd>{v}</dd></Readout>
                  {i % 4 === 3 && <span />}
                </React.Fragment>
              ))}
            </Readouts>
          </Screen>
          <ScrollLine><ScrollBar label="Frequency offset" value={0} /></ScrollLine>
          <Generator>
            <GenMain>
              <GenDisplay><span>1,00 MHz</span><span>...</span><span>50,00 MHz</span><strong>3,979 dBm</strong><span>1,0000 V</span></GenDisplay>
              <GenButtons>
                {["10 k", "100 k", "1 M", "10 M", "100 M"].map((b) => <Btn key={b} $w={36} $on={b === "100 M"}>{b}</Btn>)}
                <Push />
                {(Object.keys(WAVES) as (keyof typeof WAVES)[]).map((k) => (
                  <Btn key={k} $w={36} $on={k === "sine"} disabled={k !== "sine"} aria-label={k}><Wave kind={k} bold={k === "sine"} /></Btn>
                ))}
              </GenButtons>
              <ScrollLine><ScrollBar label="Start frequency" value={1} /></ScrollLine>
              <ScrollLine><ScrollBar label="Stop frequency" value={50} /></ScrollLine>
            </GenMain>
            <ScrollBar vertical label="Level" value={51} />
            <GenSide>
              <Btn $on $size={14} $h={23}>Вкл.</Btn>
              <Btn disabled>Мод.</Btn>
              <Btn $on>ГКЧ</Btn>
              <Btn disabled>Имп.</Btn>
              <Btn disabled>ПФ</Btn>
            </GenSide>
          </Generator>
        </AnalyzerMain>
        <Controls>
          <RunRow><Btn $on $size={14} $h={23}>Пуск</Btn><Btn $size={14} $h={23}>Однокр.</Btn></RunRow>
          <WideHead $mt={2} $h={21} $last={16} $pr={24}><Check type="checkbox" $c="#0080c8" aria-label="Время/Дел" /><h2>Время/Дел</h2><Dim>S</Dim></WideHead>
          <ButtonGrid>
            {TIMES.map((t) => <Btn key={t} $on={t === "10 mS"}>{t}</Btn>)}
            {TIMES_OFF.map((t) => <Btn key={t} disabled>{t}</Btn>)}
          </ButtonGrid>
          <SectionHead $mt={40} $h={18}><Check type="checkbox" $c="#00ff00" aria-label="A1" /><h2>A1 В/Дел</h2><Dim>BW</Dim><Dim><Wave kind="tri" /></Dim></SectionHead>
          <ButtonGrid>{["0.1 V", "50 mV", "20 mV", "10 mV", "5 mV"].map((t) => <Btn key={t} $on={t === "0.1 V"}>{t}</Btn>)}</ButtonGrid>
          <SectionHead $mt={35} $h={18}><Check type="checkbox" aria-label="A2" /><h2>A2 В/Дел</h2><Dim $dark>BW</Dim><Btn $on aria-label="A2 wave"><Wave kind="sine" /></Btn></SectionHead>
          <ButtonGrid>{["2 V", "1 V", "0.5 V", "0.2 V", "0.1 V", "50 mV", "20 mV", "10 mV", "5 mV"].map((t) => <Btn key={t} $on={t === "1 V"}>{t}</Btn>)}</ButtonGrid>
          <WideHead $mt={21} $h={19} $last={49} $pr={18}><Check type="checkbox" aria-label="Синхр." /><h2>Синхр.</h2><b><SelectField label="Sync source" value="A1" w={49} /></b></WideHead>
          <BottomButtons>
            <Btn disabled>Вкл.</Btn>
            <Btn aria-label="Rising edge"><svg width="22" height="14"><path d="M1 12h6l8-10h6" fill="none" stroke="#000" /><path d="M14 2l-1 8-6-4z" /></svg></Btn>
            <Btn $on>Авт.</Btn>
            <Btn>T+</Btn>
          </BottomButtons>
        </Controls>
      </AnalyzerBody>
    </Win>
  );
}

const Column = styled.div`
  display: flex;
  flex-direction: column;
  min-width: 0;
  background: linear-gradient(90deg, #8fc4c2 0 180px, #2a211c 182px);
`;

export default function App() {
  return (
    <>
      <Global />
      <Desktop>
        <Wallpaper $paint="#4c5c78" />
        <EditorWindow />
        <Wallpaper $paint="linear-gradient(#5f7fa6 0, #56718f 60%, #5a6068 89%, #22252c 91%)" />
        <SimWindow />
        <Wallpaper $paint="linear-gradient(#8c9bad 0, #8d8d8d 40%, #7fa5a2 70%, #4f9a98 100%)" />
        <Column><AnalyzerWindow /></Column>
        <Wallpaper $paint="linear-gradient(#3d4c5c, #2b3038 60%, #15110f)" />
      </Desktop>
    </>
  );
}
